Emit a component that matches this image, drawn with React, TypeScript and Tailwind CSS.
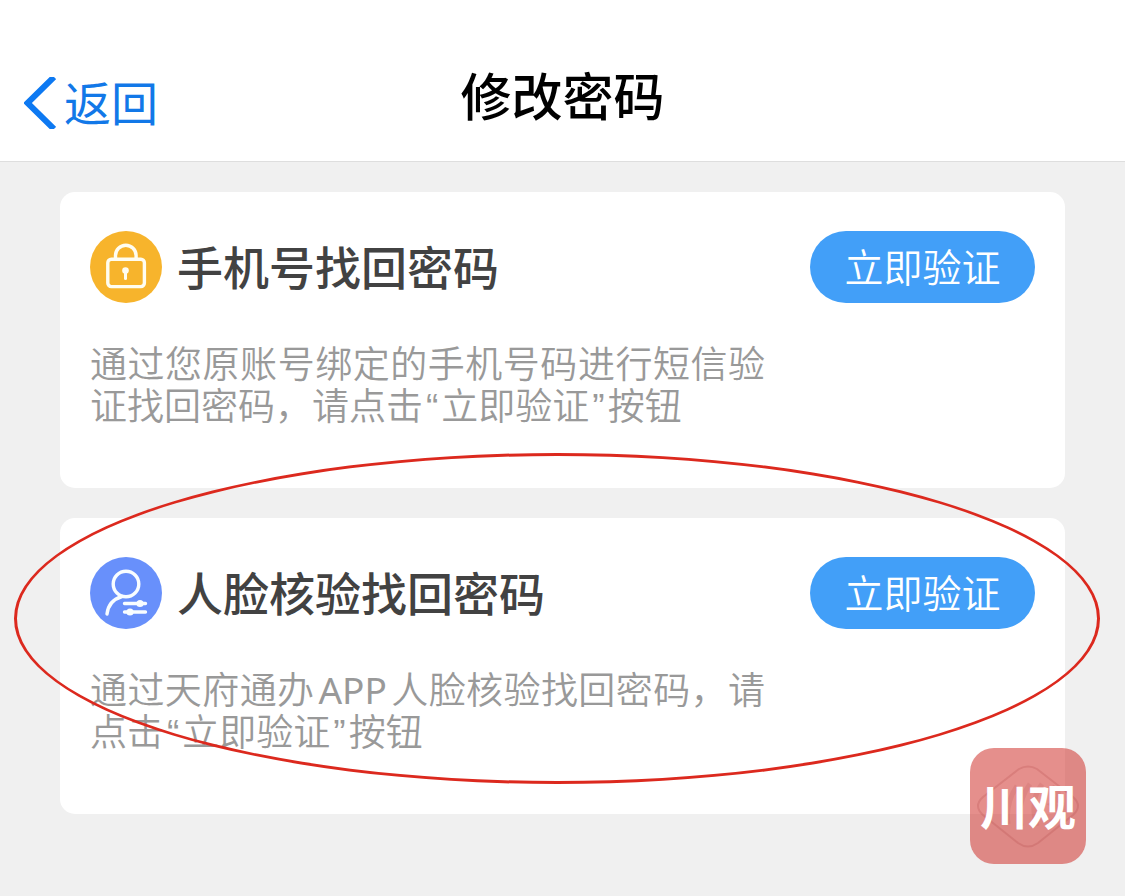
/**
 * App.tsx — "修改密码" screen.
 *
 * A nav bar plus one card per recovery method. The face check card
 * is circled, and the channel badge floats in the bottom corner.
 */
import type { ReactNode } from 'react';


interface RecoveryCardProps {
  id: string;
  icon: ReactNode;
  title: string;
  children: ReactNode;
  circled?: boolean;
}


function LockIcon() {
  return (
    <svg viewBox="0 0 72 72" className="size-[72px] shrink-0" fill="none" aria-hidden="true">
      <circle cx="36" cy="36" r="36" fill="#f7b42c" />
      <g stroke="#fffdf0" strokeWidth="3.4" strokeLinecap="round">
        <rect x="17.8" y="28.2" width="36.6" height="27.4" rx="3.5" />
        <path d="M25.5 28v-3.5a10.3 10.3 0 0 1 20.6 0V28" />
        <path d="M35.5 40v7.5" strokeWidth="3" />
      </g>
      <circle cx="35.5" cy="39.5" r="3.3" fill="#fffdf0" />
    </svg>
  );
}


function FaceIcon() {
  return (
    <svg viewBox="0 0 72 72" className="size-[72px] shrink-0" fill="none" aria-hidden="true">
      <circle cx="36" cy="36" r="36" fill="#6890fb" />
      <g stroke="#f8fdff" strokeWidth="3.4" strokeLinecap="round">
        <circle cx="36" cy="27" r="12.8" />
        <path d="M32 39.5C23.5 42 18 48.5 17 57" />
        <path d="M34.5 46.5h21M34.5 55h21" />
      </g>
      <circle cx="50" cy="46.5" r="3.6" fill="#f8fdff" />
      <circle cx="40" cy="55" r="3.6" fill="#f8fdff" />
    </svg>
  );
}


function Quoted({ children }: { children: ReactNode }) {
  return (
    <>
      <span className="mx-[3px]">“</span>
      {children}
      <span className="mx-[3px]">”</span>
    </>
  );
}


function RecoveryCard({ id, icon, title, children, circled }: RecoveryCardProps) {
  return (
    <section
      aria-labelledby={id}
      className="relative rounded-[15px] bg-white px-[30px] pt-[39px] pb-[59px]"
    >
      <div className="flex items-center gap-[15px]">
        {icon}
        <h2 id={id} className="flex-1 pb-1 text-[46px] leading-[68px] font-medium text-[#424242]">
          {title}
        </h2>
        <button
          type="button"
          className="h-[72px] w-[225px] shrink-0 rounded-full bg-[#429ff8] pb-1 text-[39px] leading-[68px] font-[350] text-white"
        >
          立即验证
        </button>
      </div>
      {/* Latin face first: the CJK one draws curly quotes a full em wide */}
      <p className="mt-[42px] max-w-[675px] text-justify font-['Liberation_Sans','Noto_Sans_CJK_SC',sans-serif] text-[37px] leading-[42px] font-[350] text-[#999]">
        {children}
      </p>
      {circled && (
        <div className="pointer-events-none absolute -top-[65px] -right-[35px] bottom-[30px] -left-[46px] rounded-[50%] border-[3px] border-[#dc291e]" />
      )}
    </section>
  );
}


function ChannelBadge() {
  return (
    <div className="absolute right-[39px] bottom-8 flex size-[116px] items-center justify-center rounded-[24px] bg-[#cb1f19]/50">
      <svg viewBox="0 0 116 116" className="absolute inset-0" fill="none" aria-hidden="true">
        <path
          d="M49 21q9-5 18 0l36 28q10 9 0 18L68 95q-10 7-20 0L13 67q-10-9 0-18z"
          stroke="#a83c3c"
          strokeOpacity=".2"
          strokeWidth="2"
        />
        <path
          d="M47 38c-8 12-11 25-9 38M60 36c-9 12-12 27-9 42M72 36c-9 12-10 27-5 42M82 39c9 4 8 12 0 17 10 4 8 14-2 18"
          stroke="#a83c3c"
          strokeOpacity=".12"
          strokeWidth="5"
        />
      </svg>
      <span className="relative pb-1 text-[48px] leading-none font-bold text-white">川观</span>
    </div>
  );
}


export default function App() {
  return (
    <div
      lang="zh-CN"
      className="relative min-h-screen bg-[#f0f0f0] font-['Noto_Sans_CJK_SC',sans-serif]"
    >
      <header className="grid grid-cols-[1fr_auto_1fr] items-start border-b border-[#dedede] bg-white px-6 pt-[63px] pb-8">
        <a href="#" className="flex items-center gap-2 pt-[10px] text-[47px] leading-[54px] text-[#1278e8]">
          <svg viewBox="0 0 32 52" className="mt-1 h-[52px] w-8" fill="none" aria-hidden="true">
            <path d="M30 0L3.5 26 30 52" stroke="#0d79f2" strokeWidth="6" />
          </svg>
          返回
        </a>
        <h1 className="text-[51px] leading-[62px] font-medium text-black">修改密码</h1>
      </header>
      <main className="flex flex-col gap-[30px] px-[60px] pt-[30px] pb-[82px]">
        <RecoveryCard id="phone" icon={<LockIcon />} title="手机号找回密码">
          通过您原账号绑定的手机号码进行短信验证找回密码，请点击<Quoted>立即验证</Quoted>按钮
        </RecoveryCard>
        <RecoveryCard id="face" icon={<FaceIcon />} title="人脸核验找回密码" circled>
          通过天府通办<span className="mx-1 font-['Noto_Sans',sans-serif] leading-none font-normal">APP</span>
          人脸核验找回密码，请点击<Quoted>立即验证</Quoted>按钮
        </RecoveryCard>
      </main>
      <ChannelBadge />
    </div>
  );
}
